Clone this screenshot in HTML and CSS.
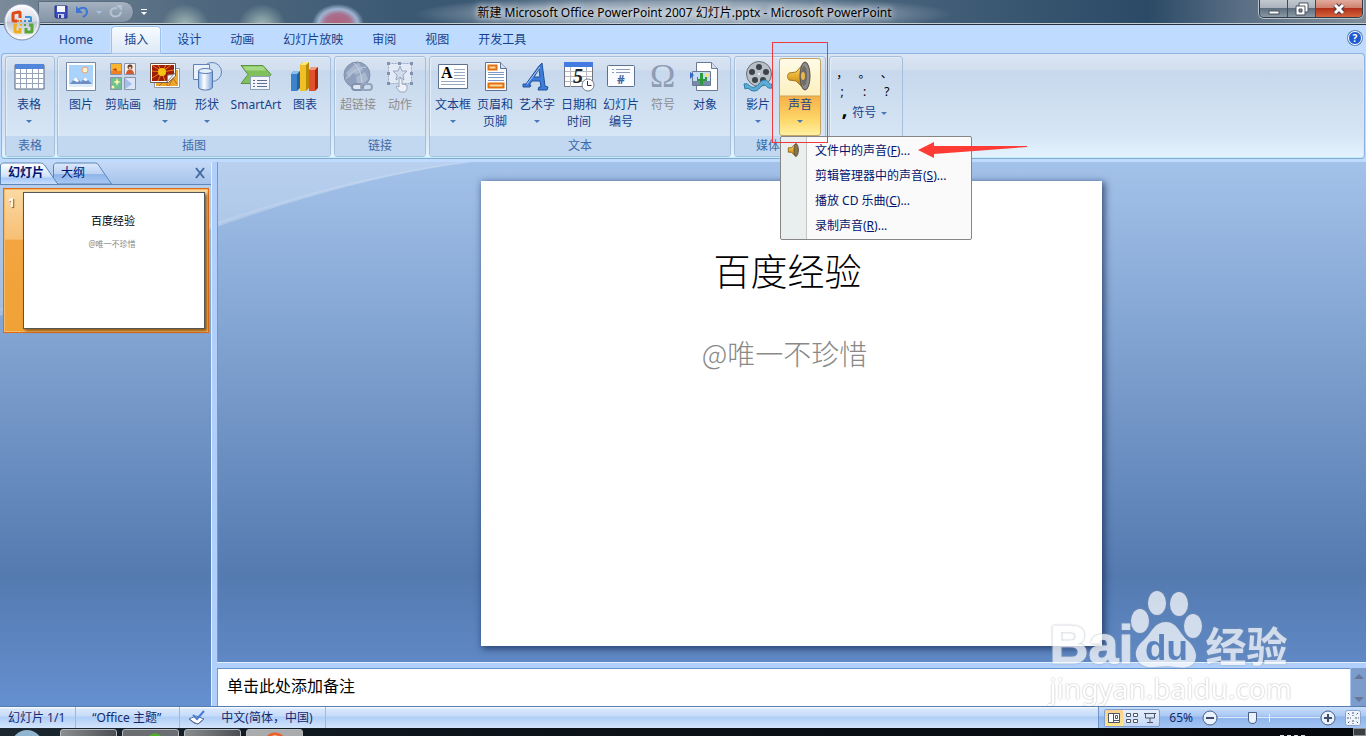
FILE: index.html
```
<!DOCTYPE html>
<html lang="zh-CN">

<head>
    <meta charset="UTF-8">
    <meta name="viewport" content="width=device-width, initial-scale=1.0">
    <title>新建 Microsoft Office PowerPoint 2007 幻灯片.pptx - Microsoft PowerPoint</title>
    <link rel="stylesheet" href="styles.css">
</head>

<body>
    <!-- 标题栏 -->
    <header class="titlebar">
        <button class="orb" aria-label="Office 按钮">
            <svg width="38" height="38" viewBox="0 0 38 38">
                <defs>
                    <linearGradient id="orbBg" x1="0" y1="0" x2="0" y2="1">
                        <stop offset="0" stop-color="#fdfdff" />
                        <stop offset=".48" stop-color="#d3d9e4" />
                        <stop offset=".5" stop-color="#b9c3d3" />
                        <stop offset="1" stop-color="#ffffff" />
                    </linearGradient>
                </defs>
                <circle cx="19" cy="19" r="18" fill="url(#orbBg)" stroke="#7d8da6" />
                <circle cx="19" cy="19" r="16" fill="none" stroke="#fff" opacity=".7" />
                <g fill="none" stroke-width="3">
                    <path d="M17 15V10a1 1 0 0 0-1-1l-5 1a1 1 0 0 0-1 1v6a1 1 0 0 0 1 1h3" stroke="#dd4b17" />
                    <path d="M22 14h5a1 1 0 0 1 1 1v3h-3" stroke="#3d8fd4" stroke-width="2" />
                    <path d="M14 22h-2v6a1 1 0 0 0 1 1h4v-4" stroke="#f2ad1c" />
                    <path d="M26 22h3v6a1 1 0 0 1-1 1h-5v-4" stroke="#5aa53a" />
                </g>
                <g fill="#e8792b"><rect x="17" y="17" width="2" height="2" /><rect x="14" y="17" width="2" height="2" /><rect x="17" y="21" width="2" height="2" fill="#f2ad1c" /><rect x="21" y="17" width="2" height="2" fill="#3d8fd4" /><rect x="21" y="21" width="2" height="2" fill="#5aa53a" /></g>
            </svg>
        </button>
        <div class="quick">
            <button aria-label="保存">
                <svg width="14" height="14" viewBox="0 0 14 14">
                    <path d="M1 1h12v12H2l-1-1z" fill="#3d4fc0" stroke="#26308c" />
                    <path d="M3 1h8v6H3z" fill="#f4f7ff" />
                    <path d="M4 9h6v4H4z" fill="#c8d0e8" />
                    <path d="M5 10h2v3H5z" fill="#26308c" />
                </svg>
            </button>
            <button aria-label="撤消">
                <svg width="14" height="14" viewBox="0 0 14 14">
                    <path d="M3 5c5-4 9-2 9 2 0 3-2 4-4 5" fill="none" stroke="#3f76d6" stroke-width="2" />
                    <path d="M1 1v7h7z" fill="#3f76d6" />
                </svg>
            </button>
            <i class="arrow light"></i>
            <button aria-label="恢复">
                <svg width="14" height="14" viewBox="0 0 14 14">
                    <path d="M8 3C2 3 1 6 2 9c2 4 9 3 10-2" fill="none" stroke="#b4c2d4" stroke-width="2" />
                    <path d="M7 0h6v6z" fill="#b4c2d4" />
                </svg>
            </button>
        </div>
        <button class="quick-more" aria-label="自定义快速访问工具栏"><i></i><i class="arrow white"></i></button>
        <h1>新建 Microsoft Office PowerPoint 2007 幻灯片.pptx - Microsoft PowerPoint</h1>
        <div class="win-buttons">
            <button aria-label="最小化"><svg width="12" height="14"><rect x="1" y="9" width="10" height="3" fill="#fff" stroke="#4b5361" /></svg></button>
            <button aria-label="还原"><svg width="14" height="14"><path d="M4 1h9v9H4z" fill="#fff" stroke="#4b5361" /><path d="M1 4h9v9H1z" fill="#fff" stroke="#4b5361" /><path d="M4 7h3v3H4z" fill="#7f8b9c" stroke="#4b5361" /></svg></button>
            <button class="win-close" aria-label="关闭"><svg width="14" height="14"><path d="M3 3l8 8M11 3l-8 8" stroke="#4b3a42" stroke-width="5" /><path d="M3 3l8 8M11 3l-8 8" stroke="#fff" stroke-width="3" /></svg></button>
        </div>
    </header>

    <!-- 选项卡 -->
    <nav class="tabs">
        <a href="#" class="home">Home</a>
        <a href="#" class="active">插入</a>
        <a href="#">设计</a>
        <a href="#">动画</a>
        <a href="#">幻灯片放映</a>
        <a href="#">审阅</a>
        <a href="#">视图</a>
        <a href="#">开发工具</a>
        <button class="help" aria-label="帮助">?</button>
    </nav>

    <!-- 功能区 -->
    <section class="ribbon">
        <div class="group">
            <div class="group-body">
                <button class="tool">
                    <svg width="32" height="32" viewBox="0 0 32 32">
                        <path d="M2 4h29v24H2z" fill="#fff" stroke="#56657c" />
                        <path d="M2 3h29v5H2z" fill="#4f86dc" />
                        <path d="M2 12.500h29M2 17.500h29M2 22.500h29M7.500 8v20M13.500 8v20M19.500 8v20M25.500 8v20" stroke="#98a5b8" />
                    </svg>
                    <span>表格</span><i class="arrow"></i>
                </button>
            </div>
            <div class="group-title">表格</div>
        </div>

        <div class="group">
            <div class="group-body">
                <button class="tool">
                    <svg width="32" height="32" viewBox="0 0 32 32">
                        <path d="M1.500 1.500h29v28h-29z" fill="#fff" stroke="#7589a5" />
                        <path d="M4 4h24v20H4z" fill="#a9d3fa" />
                        <circle cx="20" cy="9" r="3" fill="#fff0d0" stroke="#f0a070" />
                        <path d="M4 24l7-8 5 5 4-5 8 8z" fill="#6b8fc4" />
                        <path d="M8 19l3-3 3 4-2 1-2-1zM18 19l2-3 3 3-2 1z" fill="#fff" />
                        <path d="M4 23h24v3H4z" fill="#dcecfb" />
                    </svg>
                    <span>图片</span>
                </button>
                <button class="tool">
                    <svg width="32" height="32" viewBox="0 0 32 32">
                        <path d="M3.500 2.500h11v11h-11z" fill="#f9b52f" stroke="#8a94a8" />
                        <path d="M4 10h10v3H4z" fill="#ee7f22" /><path d="M5 9l4-2 1 3z" fill="#c23a18" />
                        <path d="M17.500 2.500h11v11h-11z" fill="#f4eee8" stroke="#8a94a8" />
                        <circle cx="23" cy="6" r="2.500" fill="#5a3a30" /><path d="M19 13c0-6 8-6 8 0z" fill="#d2582e" /><circle cx="23" cy="7" r="1.500" fill="#f0c09a" />
                        <path d="M3.500 16.500h11v12h-11z" fill="#6fbf92" stroke="#8a94a8" />
                        <path d="M10 17l1 3 3 1-3 1-1 3-1-3-3-1 3-1z" fill="#fbf6a8" /><circle cx="6" cy="26" r="1.500" fill="#fbf6a8" />
                        <path d="M17.500 16.500h11v12h-11z" fill="#dbe6fb" stroke="#8a94a8" />
                        <path d="M18 17l7 6-7 5z" fill="#a5bdec" />
                    </svg>
                    <span>剪贴画</span>
                </button>
                <button class="tool">
                    <svg width="32" height="32" viewBox="0 0 32 32">
                        <path d="M5.500 7.500h25v19h-25z" fill="#fff" stroke="#8f98a8" />
                        <path d="M7 9h22v16H7z" fill="#eda62c" />
                        <path d="M10 25l8-8 0 8M20 25l4-8 4 6" stroke="#c66f12" fill="none" />
                        <path d="M1.500 2.500h25V15l-7 6.500h-18z" fill="#fff" stroke="#6f5a50" />
                        <path d="M3 4h22v9l-7 7H3z" fill="#9c1f08" />
                        <path d="M13 11L3 4M13 11L9 4M13 11l4-7M13 11l9-7M13 11L3 10M13 11L3 17M13 11l-4 9M13 11l3 9M13 11l12-2" stroke="#ef7b14" stroke-width="1" />
                        <circle cx="13" cy="11" r="4" fill="#f6c414" />
                        <path d="M18 21c1-3 0-5 1-7 3 0 5 0 7-2z" fill="#fff" stroke="#888" />
                    </svg>
                    <span>相册</span><i class="arrow"></i>
                </button>
                <button class="tool">
                    <svg width="32" height="32" viewBox="0 0 32 32">
                        <defs><linearGradient id="cyl"><stop offset="0" stop-color="#8fb5e6" /><stop offset=".4" stop-color="#fff" /><stop offset="1" stop-color="#7ba4dc" /></linearGradient></defs>
                        <circle cx="21" cy="11" r="9.500" fill="#cfe0f5" stroke="#5e83b8" />
                        <path d="M2.500 3.500h16v15h-16z" fill="#e9f1fc" stroke="#5e83b8" />
                        <path d="M7.500 10v16c0 4 14 4 14 0V10z" fill="url(#cyl)" stroke="#5578ad" />
                        <ellipse cx="14.500" cy="10" rx="7" ry="2.500" fill="#e6f0fd" stroke="#5578ad" />
                    </svg>
                    <span>形状</span><i class="arrow"></i>
                </button>
                <button class="tool wide">
                    <svg width="34" height="32" viewBox="0 0 34 32">
                        <path d="M2 4.500h22l8 9-7 9H2l7-9z" fill="#7fc05c" stroke="#5a9440" />
                        <path d="M4 5.500h20l3 4H7z" fill="#a5d985" />
                        <path d="M11.500 15.500h19v13h-19z" fill="#f2f6fc" stroke="#8d9fba" />
                        <path d="M14 19.500h2M18 19.500h10M14 22.500h2M18 22.500h10M14 25.500h2M18 25.500h10" stroke="#5b6e8c" />
                    </svg>
                    <span>SmartArt</span>
                </button>
                <button class="tool">
                    <svg width="32" height="32" viewBox="0 0 32 32">
                        <path d="M2 13l3-3h6v17l-3 3H2z" fill="#27609f" /><path d="M2 13h6v17H2z" fill="#3b83cd" /><path d="M2 13l3-3h6l-3 3z" fill="#8cc0ee" />
                        <path d="M11 4l3-3h6v26l-3 3h-6z" fill="#b98a08" /><path d="M11 4h6v26h-6z" fill="#f0c024" /><path d="M11 4l3-3h6l-3 3z" fill="#fbe77a" />
                        <path d="M20 9l3-3h6v21l-3 3h-6z" fill="#a52a10" /><path d="M20 9h6v21h-6z" fill="#e2502c" /><path d="M20 9l3-3h6l-3 3z" fill="#f79a7e" />
                    </svg>
                    <span>图表</span>
                </button>
            </div>
            <div class="group-title">插图</div>
        </div>

        <div class="group">
            <div class="group-body">
                <button class="tool" disabled>
                    <svg width="32" height="32" viewBox="0 0 32 32">
                        <circle cx="15" cy="14" r="13" fill="#8fa0bd" stroke="#8191ae" />
                        <path d="M4 12l8-8 5-2 4 7-6 5-4-2-4 5zM14 16l9-5 3 7-6 6-5-2z" fill="#a9b8cf" />
                        <path d="M4 18c5-7 12-11 20-12M12 2c6 6 8 13 8 23" stroke="#c5d0e0" fill="none" />
                        <rect x="10" y="23" width="11" height="6" rx="3" fill="#dfe6f0" stroke="#8191ae" stroke-width="2" />
                        <rect x="19" y="23" width="11" height="6" rx="3" fill="none" stroke="#95a3bb" stroke-width="2" />
                    </svg>
                    <span>超链接</span>
                </button>
                <button class="tool" disabled>
                    <svg width="32" height="32" viewBox="0 0 32 32">
                        <path d="M4.500 2.500h23v20h-23z" fill="#e2eaf5" stroke="#9aa8c0" stroke-dasharray="2 1" />
                        <path d="M16 5l2 5h5l-4 4 1 5-4-3-4 3 1-5-4-4h5z" fill="#d2dceb" stroke="#9aa8c0" />
                        <path d="M3 1h3v3H3zM14 1h3v3h-3zM26 1h3v3h-3zM3 21h3v3H3zM26 21h3v3h-3zM3 11h3v3H3zM26 11h3v3h-3z" fill="#8191ae" />
                        <path d="M15 19c0-2 3-2 3 0v4l5 1v4l-2 3h-5l-4-5 1-1 2 1z" fill="#edf1f7" stroke="#9aa8c0" />
                    </svg>
                    <span>动作</span>
                </button>
            </div>
            <div class="group-title">链接</div>
        </div>

        <div class="group">
            <div class="group-body">
                <button class="tool">
                    <svg width="32" height="32" viewBox="0 0 32 32">
                        <path d="M1.500 3.500h29v24h-29z" fill="#fff" stroke="#5d7190" />
                        <text x="4" y="17" class="serif-a">A</text>
                        <path d="M17 8.500h11M17 11.500h11M17 14.500h11M17 17.500h11M4 20.500h24M4 23.500h24" stroke="#9aa9c0" />
                    </svg>
                    <span>文本框</span><i class="arrow"></i>
                </button>
                <button class="tool">
                    <svg width="32" height="32" viewBox="0 0 32 32">
                        <path d="M6.500 1.500h15l6 6v22h-21z" fill="#fff" stroke="#5d7190" />
                        <path d="M21.500 1.500v6h6" fill="#d4deee" stroke="#5d7190" />
                        <path d="M9.500 4.500h8v4h-8zM9.500 22.500h15v4h-15z" fill="#ffd9a0" stroke="#e0720e" stroke-width="2" />
                        <path d="M9 11.500h16M9 13.500h16M9 16.500h16M9 19.500h16" stroke="#7f9ac6" />
                    </svg>
                    <span>页眉和<br>页脚</span>
                </button>
                <button class="tool">
                    <svg width="32" height="32" viewBox="0 0 32 32">
                        <path d="M2 23h3L18 5l3-3 3 23 3 1-1 3h-9l1-3h2l-1-6h-8l-3 4h2l-1 2H2zM13 16h6l-1-8z" fill="#3c7ddb" stroke="#22509a" fill-rule="evenodd" />
                        <path d="M6 23L19 6" stroke="#a8ccf8" />
                    </svg>
                    <span>艺术字</span><i class="arrow"></i>
                </button>
                <button class="tool">
                    <svg width="32" height="32" viewBox="0 0 32 32">
                        <path d="M1.500 2.500h28v23h-28z" fill="#fff" stroke="#6e7480" />
                        <path d="M1 1h29v5H1z" fill="#447be0" />
                        <path d="M2 10.500h27M2 15.500h27M2 20.500h27M7.500 6v20M23.500 6v20" stroke="#b7b9bf" />
                        <text x="10" y="22" class="serif-5">5</text>
                        <circle cx="25" cy="24" r="6" fill="#fff" stroke="#777f8c" />
                        <path d="M24.500 20v4.500h4" stroke="#333" fill="none" />
                    </svg>
                    <span>日期和<br>时间</span>
                </button>
                <button class="tool">
                    <svg width="32" height="32" viewBox="0 0 32 32">
                        <rect x="2.500" y="4.500" width="27" height="21" rx="1" fill="#fafcff" stroke="#5d7190" />
                        <path d="M7 8.500h2M11 8.500h14M7 11.500h2M11 11.500h14" stroke="#8a9bb8" />
                        <text x="12" y="23" class="hash">#</text>
                    </svg>
                    <span>幻灯片<br>编号</span>
                </button>
                <button class="tool" disabled>
                    <svg class="omega-box" width="32" height="32" viewBox="0 0 32 32"><text x="3" y="26" class="omega">Ω</text></svg>
                    <span>符号</span>
                </button>
                <button class="tool">
                    <svg width="32" height="32" viewBox="0 0 32 32">
                        <path d="M7.500 1.500h15l6 6v22h-21z" fill="#fff" stroke="#6a7a94" />
                        <path d="M22.500 1.500v6h6" fill="#d4deee" stroke="#6a7a94" />
                        <path d="M3.500 10.500h18v14h-18z" fill="#c3ddf6" stroke="#6a7a94" />
                        <path d="M4 20h17v4H4z" fill="#758aa4" />
                        <circle cx="18" cy="14" r="2" fill="#f7e27a" />
                        <path d="M11 12h3v6h2v-2h2v4h-4v4h-3v-4H8v-4h1v2h2z" fill="#2f9a3c" />
                        <path d="M1 11l4 3-4 4z" fill="#3468c8" />
                    </svg>
                    <span>对象</span>
                </button>
            </div>
            <div class="group-title">文本</div>
        </div>

        <div class="group">
            <div class="group-body">
                <button class="tool">
                    <svg width="32" height="32" viewBox="0 0 32 32">
                        <circle cx="17" cy="13" r="12.500" fill="#b9bfc6" stroke="#666d75" />
                        <g fill="#3c4249"><circle cx="17" cy="6" r="3" /><circle cx="10" cy="11" r="3" /><circle cx="24" cy="11" r="3" /><circle cx="13" cy="19" r="3" /><circle cx="21" cy="19" r="3" /></g>
                        <circle cx="17" cy="13" r="1" fill="#fff" />
                        <path d="M2 23c5-2 6 5 11 3 5-2 5-7 10-7 4 0 3 5 7 4v4c-6 1-5-3-8-3-4 0-4 6-10 6-5 0-4-4-9-2z" fill="#5badd8" stroke="#2f7ba8" />
                    </svg>
                    <span>影片</span><i class="arrow"></i>
                </button>
                <div class="dropdown">
                    <button class="tool pressed">
                        <svg width="32" height="32" viewBox="0 0 32 32">
                            <defs><linearGradient id="horn" x1="0" y1="0" x2="0" y2="1"><stop offset="0" stop-color="#fbe08a" /><stop offset=".5" stop-color="#e9b032" /><stop offset="1" stop-color="#9a6a10" /></linearGradient></defs>
                            <path d="M5 12l7-1L21 1v28l-9-9-7-1c-2-2-2-5 0-7z" fill="url(#horn)" stroke="#a87a20" />
                            <ellipse cx="21" cy="15" rx="5" ry="14" fill="#8d8b88" stroke="#4f4b48" />
                            <ellipse cx="20" cy="15" rx="3" ry="10" fill="#6e6a66" />
                            <ellipse cx="19" cy="15" rx="2" ry="4" fill="#e8b84c" />
                        </svg>
                        <span>声音</span><i class="arrow"></i>
                    </button>
                    <ul class="menu">
                        <li><a href="#"><svg width="14" height="16" viewBox="0 0 32 32"><path d="M3 11h7L20 1v30L10 21H3z" fill="url(#horn)" stroke="#8a6414" stroke-width="2" /><ellipse cx="21" cy="16" rx="5" ry="14" fill="#8d7440" stroke="#4f4b48" stroke-width="2" /></svg>文件中的声音(<u>F</u>)...</a></li>
                        <li><a href="#">剪辑管理器中的声音(<u>S</u>)...</a></li>
                        <li><a href="#">播放 CD 乐曲(<u>C</u>)...</a></li>
                        <li><a href="#">录制声音(<u>R</u>)...</a></li>
                    </ul>
                    <div class="mark-box"></div>
                    <svg class="mark-arrow" width="110" height="18" viewBox="0 0 110 18"><path d="M0 9L16 1v4l93 0v1L16 13v4z" fill="#ff3b35" /></svg>
                </div>
            </div>
            <div class="group-title">媒体剪辑</div>
        </div>

        <div class="group">
            <div class="group-body symbols">
                <button>，</button><button>。</button><button>、</button>
                <button>;</button><button>:</button><button>?</button>
                <button class="symbols-more"><b>,</b>符号<i class="arrow"></i></button>
            </div>
            <div class="group-title"></div>
        </div>
    </section>

    <!-- 工作区 -->
    <main class="main">
        <svg class="wave" width="470" height="154" viewBox="0 0 470 154">
            <path d="M0 0h470Q280 25 0 154z" fill="#fff" opacity=".24" />
            <path d="M470 0Q280 22 0 148" fill="none" stroke="#fff" stroke-width="2" opacity=".12" />
        </svg>
        <aside class="pane">
            <div class="pane-tabs">
                <svg width="114" height="22" viewBox="0 0 114 22">
                    <defs><linearGradient id="tabBg" x1="0" y1="0" x2="0" y2="1"><stop offset="0" stop-color="#dce9fb" /><stop offset=".5" stop-color="#bcd3f3" /><stop offset=".55" stop-color="#8fb5ea" /><stop offset="1" stop-color="#a9c8f2" /></linearGradient>
                        <linearGradient id="tabOn" x1="0" y1="0" x2="0" y2="1"><stop offset="0" stop-color="#fff" /><stop offset=".6" stop-color="#d2e3fb" /><stop offset=".7" stop-color="#a6caf9" /><stop offset="1" stop-color="#cfe1f9" /></linearGradient></defs>
                    <path d="M53.500 21V3l2-2h40q2 0 3 2l13 19H58z" fill="url(#tabBg)" stroke="#5c87b8" />
                    <path d="M.5 23V3l2-2h38q2 0 4 2l14 20z" fill="url(#tabOn)" stroke="#5c87b8" />
                </svg>
                <button class="on">幻灯片</button>
                <button>大纲</button>
                <button class="pane-close" aria-label="关闭"><svg width="12" height="12"><path d="M2 1l8 10M10 1L2 11" stroke="#416ba3" stroke-width="2" /></svg></button>
            </div>
            <div class="thumb">
                <span>1</span>
                <div class="thumb-slide">
                    <h3>百度经验</h3>
                    <p>@唯一不珍惜</p>
                </div>
            </div>
        </aside>
        <div class="work">
            <div class="stage">
                <article class="slide">
                    <h2>百度经验</h2>
                    <p>@唯一不珍惜</p>
                </article>
            </div>
            <div class="notes">
                <textarea rows="1" aria-label="备注">单击此处添加备注</textarea>
                <div class="scroll"><i></i><i class="down"></i></div>
            </div>
        </div>
        <div class="watermark">
            <div class="logo">
                <span class="logo-bai">Bai</span>
                <svg width="74" height="80" viewBox="0 0 74 80">
                    <g fill="#fff"><ellipse cx="10" cy="31" rx="9" ry="12" /><ellipse cx="27" cy="13" rx="9" ry="12" /><ellipse cx="49" cy="14" rx="9" ry="12" /><ellipse cx="63" cy="36" rx="9" ry="12" />
                        <path d="M36 32c-12 0-15 12-22 18S4 62 7 69s11 9 18 8 15-1 21 0 16 1 19-6-1-15-8-21-10-18-21-18z" /></g>
                    <text x="15" y="70" class="du">du</text>
                </svg>
                <span class="logo-cn">经验</span>
            </div>
            <div class="logo-url">jingyan.baidu.com</div>
        </div>
    </main>

    <!-- 状态栏 -->
    <footer class="status">
        <span class="cell">幻灯片 1/1</span>
        <span class="cell theme">“Office 主题”</span>
        <span class="cell lang">
            <svg width="17" height="15" viewBox="0 0 17 15"><path d="M1 9l7-3 8 3-6 5-4-1z" fill="#fff" stroke="#5c6f98" /><path d="M1 9l6 4 3 1 6-5" fill="none" stroke="#5c6f98" /><path d="M5 5l4 4 7-8" fill="none" stroke="#4a7bdc" stroke-width="2" /></svg>
            中文(简体，中国)
        </span>
        <div class="zoombar">
            <div class="views">
                <button class="on" aria-label="普通视图"><svg width="12" height="12"><path d="M.5 1.500h11v9h-11zM5.500 1.500v9M7.500 3.500h2v3h-2zM5.500 8.500h6" fill="#fff" stroke="#4d5666" /></svg></button>
                <button aria-label="幻灯片浏览"><svg width="12" height="12"><path d="M.5 1.500h4v3h-4zM7.500 1.500h4v3h-4zM.5 7.500h4v3h-4zM7.500 7.500h4v3h-4z" fill="#fff" stroke="#4d5666" /></svg></button>
                <button aria-label="幻灯片放映"><svg width="12" height="12"><path d="M0 1.500h12M1.500 2v4h9V2M6 6v4M3 10.500h6" fill="none" stroke="#4d5666" stroke-width="1" /></svg></button>
            </div>
            <span class="percent">65%</span>
            <button class="round" aria-label="缩小"><svg width="16" height="16"><circle cx="8" cy="8" r="7" fill="#e9f1fd" stroke="#4a5f85" /><path d="M4 8h8" stroke="#3c4c6b" stroke-width="2" /></svg></button>
            <input type="range" min="0" max="100" value="32" aria-label="显示比例">
            <button class="round" aria-label="放大"><svg width="16" height="16"><circle cx="8" cy="8" r="7" fill="#e9f1fd" stroke="#4a5f85" /><path d="M4 8h8M8 4v8" stroke="#3c4c6b" stroke-width="2" /></svg></button>
            <button class="fit" aria-label="适应窗口"><svg width="16" height="16"><rect x=".5" y=".5" width="15" height="15" rx="2" fill="#eef4fd" stroke="#8aa4cc" /><path d="M8 2v4M8 10v4M2 8h4M10 8h4M3 3l2 2M13 3l-2 2M3 13l2-2M13 13l-2-2" stroke="#4d5666" stroke-dasharray="2 1" /></svg></button>
        </div>
    </footer>

    <!-- 任务栏 -->
    <div class="taskbar">
        <i class="start"></i>
        <i class="task"></i>
        <i class="task green"></i>
        <i class="task"></i>
        <i class="task ppt"></i>
        <i class="clock"></i>
        <i class="desk"></i>
    </div>
</body>

</html>
```
FILE: styles.css
```
* {
    box-sizing: border-box;
}

body {
    margin: 0;
    height: 100vh;
    display: flex;
    flex-direction: column;
    overflow: hidden;
    background: #bfdbff;
    color: #15428b;
    font: 12px/16px "Noto Sans", "Noto Sans CJK SC", sans-serif;
}

button {
    margin: 0;
    padding: 0;
    border: 0;
    background: none;
    color: inherit;
    font: inherit;
}

a {
    color: inherit;
    text-decoration: none;
}

svg {
    display: block;
    flex: none;
}

.arrow {
    width: 0;
    border: 3px solid transparent;
    border-top-color: #4a78b5;
    border-bottom: 0;
}

.arrow.light {
    border-top-color: #a9c2e6;
}

.arrow.white {
    border-top-color: #fff;
}

/* 标题栏 */
.titlebar {
    position: relative;
    flex: 0 0 25px;
    display: flex;
    align-items: center;
    background:
        radial-gradient(ellipse 26px 20px at 338px 24px, #b0607a 0, #a86f8c 50%, #9db4d2 75%, transparent 100%),
        radial-gradient(ellipse 24px 22px at 185px 26px, #a5bcb8, transparent),
        radial-gradient(ellipse 24px 22px at 262px 26px, #a5bcb8, transparent),
        radial-gradient(ellipse 270px 20px at 50% 14px, #b4c1cd 0, #8d9fb0 60%, transparent 100%),
        linear-gradient(90deg, #7a8a99 0, #51697f 14%, #3b5873 30%, #46617a 66%, #2b4a66 84%, #5b6f85 91%, #7f8c98 100%);
    border-bottom: 1px solid #22303e;
    box-shadow: inset 0 -1px #c3ccd0;
}

.orb {
    position: absolute;
    left: 3px;
    top: 3px;
    z-index: 5;
}

.quick {
    height: 22px;
    margin-left: 38px;
    padding: 0 10px 0 15px;
    display: flex;
    align-items: center;
    gap: 7px;
    border: 1px solid #5b6c80;
    border-radius: 0 12px 12px 0;
    background: linear-gradient(#a3b1c0, #8494a6);
}

.quick-more {
    margin-left: 7px;
}

.quick-more i {
    display: block;
}

.quick-more i:first-child {
    height: 1px;
    margin-bottom: 2px;
    background: #fff;
}

.titlebar h1 {
    position: absolute;
    left: 0;
    right: 0;
    top: 5px;
    margin: 0 0 0 3px;
    text-align: center;
    color: #000;
    font-size: 12px;
    font-weight: 400;
    text-shadow: 0 0 6px #fff, 0 0 8px #dfe6ec;
}

.win-buttons {
    align-self: flex-start;
    margin: 0 3px 0 auto;
    display: flex;
    height: 18px;
    border: 1px solid #2f3b49;
    border-top: 0;
    border-radius: 0 0 5px 5px;
    box-shadow: 0 0 0 1px #b6c1ca;
    overflow: hidden;
}

.win-buttons button {
    width: 28px;
    display: flex;
    justify-content: center;
    align-items: center;
    border-right: 1px solid #3c4a5a;
    background: linear-gradient(#c2c9d0 0, #aab3bd 45%, #5f6e7e 50%, #8c99a6 100%);
}

.win-buttons .win-close {
    width: 46px;
    border-right: 0;
    background: linear-gradient(#e2ab9f 0, #d0826f 45%, #b3311a 50%, #d4633c 100%);
}

/* 选项卡 */
.tabs {
    flex: 0 0 27px;
    display: flex;
    gap: 3px;
    padding: 1px 4px 0 46px;
    background: #bfdbff;
}

.tabs a {
    height: 27px;
    padding: 5px 12px 0;
    border: 1px solid transparent;
    border-bottom: 0;
}

.tabs .home {
    margin-right: 2px;
}

.tabs .active {
    position: relative;
    z-index: 3;
    border-color: #9bc3ee;
    border-radius: 4px 4px 0 0;
    background: linear-gradient(#f7fbff, #dde9f7);
    box-shadow: 0 0 2px #fff;
}

.help {
    width: 14px;
    height: 14px;
    margin: 5px 0 0 auto;
    border: 1px solid #fff;
    border-radius: 50%;
    background: #1d58cf;
    box-shadow: 0 0 0 1px #5c85c4;
    color: #fff;
    font-size: 10px;
    font-weight: 700;
    line-height: 12px;
}

/* 功能区 */
.ribbon {
    flex: none;
    position: relative;
    z-index: 2;
    display: flex;
    gap: 3px;
    margin: 0 1px 3px 1px;
    padding: 2px 2px 1px 3px;
    border: 1px solid #8db2e3;
    border-bottom-color: #86a9cf;
    border-radius: 4px;
    background: linear-gradient(#dbe6f3 0, #d1deee 16px, #c7d8ed 17px, #d6e5f4 80px, #e3f4ff 100%);
    box-shadow: inset 0 -1px #c0f0fb, inset -1px 0 #c8ecfb;
}

.group {
    border: 1px solid #a5c0dd;
    border-radius: 3px;
    box-shadow: inset 1px 1px #e4eef8;
    padding-top: 1px;
}

.group:first-child {
    margin-right: -1px;
}

.group-body {
    display: flex;
    height: 78px;
    padding: 0 4px 0 2px;
}

.group-title {
    height: 20px;
    border-radius: 0 0 2px 2px;
    background: #c1d8f0;
    color: #3e6aaa;
    line-height: 20px;
    text-align: center;
}

.tool {
    width: 42px;
    height: 78px;
    padding-top: 3px;
    display: flex;
    flex-direction: column;
    align-items: center;
    white-space: nowrap;
}

.tool.wide {
    width: 56px;
}

.tool span {
    margin-top: 3px;
    line-height: 17px;
}

.tool .arrow {
    margin-top: 7px;
}

.tool:disabled {
    color: #8d8d8d;
}

.tool.pressed {
    padding-top: 2px;
    border: 1px solid #c2a564;
    border-radius: 3px;
    background: linear-gradient(#fffbe6 0, #fdefc0 36px, #c9a45c 37px, #f8b04a 38px, #fdd667 60px, #fff0a0 100%);
}

.serif-a,
.serif-5,
.omega {
    font-family: "Liberation Serif", serif;
}

.serif-a {
    font-size: 16px;
    font-weight: 700;
}

.serif-5 {
    font-size: 20px;
    font-style: italic;
    font-weight: 700;
    fill: #222;
}

.hash {
    font-size: 12px;
    font-weight: 700;
    fill: #41679f;
}

.omega-box {
    overflow: visible;
}

.omega {
    font-size: 34px;
    fill: #8e9cb4;
}

.symbols {
    width: 72px;
    padding: 7px 4px 0 1px;
    display: grid;
    grid-template-columns: repeat(3, 1fr);
    grid-auto-rows: 18px;
    color: #000;
}

.symbols-more {
    grid-column: 1 / 4;
    display: flex;
    align-items: center;
    justify-content: center;
    gap: 5px;
    margin-top: 3px;
    height: 18px;
    color: #15428b;
}

.symbols-more b {
    color: #000;
    font-size: 20px;
    line-height: 10px;
    padding-bottom: 8px;
}

/* 声音下拉菜单 */
.dropdown {
    position: relative;
}

.menu {
    position: absolute;
    left: 1px;
    top: 78px;
    width: 192px;
    margin: 0;
    padding: 1px;
    list-style: none;
    border: 1px solid #868686;
    border-radius: 2px;
    background: linear-gradient(90deg, #e9eeee 0, #e9eeee 25px, #c5c5c5 25px, #c5c5c5 26px, #fafafa 26px);
    color: #00156e;
}

.menu a {
    position: relative;
    display: block;
    height: 25px;
    padding-left: 33px;
    line-height: 26px;
}

.menu svg {
    position: absolute;
    left: 5px;
    top: 4px;
}

.mark-box {
    position: absolute;
    left: -7px;
    top: -16px;
    width: 56px;
    height: 101px;
    border: 1px solid #f03a3e;
    pointer-events: none;
}

.mark-arrow {
    position: absolute;
    left: 139px;
    top: 83px;
}

/* 工作区 */
.main {
    position: relative;
    flex: 1;
    min-height: 0;
    display: flex;
    background: linear-gradient(#a3c2ea 0, #547ab0 76%, #6590cf 100%);
}

.wave {
    position: absolute;
    left: 0;
    top: 0;
}

.pane {
    position: relative;
    flex: 0 0 212px;
}

.pane-tabs {
    position: relative;
    height: 23px;
    display: flex;
    align-items: center;
    border: 1px solid #5c87b8;
    border-width: 0 1px 1px 0;
    background: linear-gradient(#c6daf6, #a5c3ec);
    color: #00156e;
}

.pane-tabs > svg {
    position: absolute;
    left: 0;
    top: 0;
}

.pane-tabs button {
    position: relative;
    margin-left: 17px;
}

.pane-tabs .on {
    margin-left: 8px;
    font-weight: 700;
}

.pane-tabs .pane-close {
    margin: 0 5px 0 auto;
}

.thumb {
    display: flex;
    margin: 3px 3px 0;
    padding: 3px;
    border: 1px solid #e06a14;
    background: linear-gradient(#fbd9a4 0, #f7bf74 35%, #f3a640 36%, #f0a136 100%);
    box-shadow: inset 0 0 0 1px #f8b964;
}

.thumb span {
    flex: 0 0 16px;
    padding: 3px 0 0 1px;
    color: #fff;
    font-weight: 700;
    text-shadow: 1px 1px 1px #6b4a20;
}

.thumb-slide {
    flex: 1;
    aspect-ratio: 4 / 3;
    border: 1px solid #555;
    background: #fff;
    box-shadow: 2px 2px 3px #8a5a1c;
    text-align: center;
}

.thumb-slide h3 {
    margin: 20px 2px 0 0;
    color: #000;
    font-size: 11px;
    font-weight: 400;
}

.thumb-slide p {
    margin: 7px 4px 0 0;
    color: #898989;
    font-size: 8px;
}

.work {
    position: relative;
    flex: 1;
    min-width: 0;
    display: flex;
    flex-direction: column;
    border-left: 5px solid #b0d0fb;
    box-shadow: inset 1px 0 #6f99d0, -1px 0 #e6f0fd;
}

.stage {
    flex: 1;
    min-height: 0;
    padding-top: 19px;
}

.slide {
    width: 54%;
    aspect-ratio: 4 / 3;
    margin: 0 auto;
    background: #fff;
    box-shadow: 2px 2px 7px 1px rgba(20, 40, 80, .7);
    text-align: center;
    font-family: "Noto Sans CJK SC", sans-serif;
    font-weight: 300;
    overflow: hidden;
}

.slide h2 {
    margin: 63px 8px 0 0;
    color: #000;
    font-size: 37px;
    font-weight: 300;
    line-height: 52px;
}

.slide p {
    margin: 37px 14px 0 0;
    color: #898989;
    font-size: 28px;
    line-height: 40px;
}

.notes {
    position: relative;
    flex: 0 0 43px;
    display: flex;
    border-top: 5px solid #b0d0fb;
    box-shadow: inset 0 1px #6593cf, 0 -1px #e6f0fd;
}

.notes textarea {
    flex: 1;
    margin: 1px 0 0 1px;
    padding: 4px 9px;
    border: 0;
    resize: none;
    overflow: hidden;
    background: #fff;
    color: #000;
    font: 16px/24px "Noto Sans CJK SC", sans-serif;
}

.scroll {
    width: 16px;
    padding: 6px 0 4px;
    display: flex;
    flex-direction: column;
    align-items: center;
    justify-content: space-between;
    border-left: 1px solid #a9c8f2;
    background: #7c9ccb;
}

.scroll i {
    border: 5px solid transparent;
    border-top: 0;
    border-bottom-color: #66779a;
}

.scroll .down {
    transform: rotate(180deg);
}

.watermark {
    position: absolute;
    right: 74px;
    bottom: 0;
    opacity: .72;
    color: #fff;
}

.logo {
    display: flex;
    align-items: flex-end;
    filter: drop-shadow(0 0 1px #8a96a8);
}

.logo-bai {
    font: 700 54px/52px "Liberation Sans", sans-serif;
    -webkit-text-stroke: 1px #fff;
}

.logo svg {
    margin-left: -4px;
}

.logo-cn {
    margin: 0 4px 3px 2px;
    font: 700 41px/46px "Noto Sans CJK SC", sans-serif;
}

.du {
    font: 700 35px "Liberation Sans", sans-serif;
    fill: #5a83bd;
}

.logo-url {
    height: 36px;
    font-size: 28px;
    line-height: 36px;
    text-shadow: 0 0 2px #888;
}

/* 状态栏 */
.status {
    flex: 0 0 22px;
    display: flex;
    border-top: 1px solid #567db0;
    background: linear-gradient(#fff 0, #d9e7fb 2px, #c5dcf9 9px, #b0cef7 10px, #d3e4fc 100%);
    line-height: 21px;
}

.cell {
    padding: 0 10px 0 8px;
    border-right: 1px solid #9ab9e6;
    color: #15296e;
}

.theme {
    padding: 0 18px 0 16px;
}

.lang {
    display: flex;
    align-items: center;
    gap: 16px;
    padding: 0 12px 0 8px;
}

.zoombar {
    margin-left: auto;
    padding: 0 5px;
    display: flex;
    align-items: center;
    border-left: 1px solid #6e93c8;
    background: linear-gradient(#c9defb 0, #a9c8f3 9px, #8db4ec 10px, #a4c5f2 100%);
    color: #15296e;
}

.views {
    display: flex;
    height: 18px;
    border: 1px solid #7f9fcf;
    border-radius: 2px;
    background: linear-gradient(#e6effc, #c3d9f8);
}

.views button {
    width: 18px;
    display: flex;
    align-items: center;
    justify-content: center;
}

.views .on {
    background: linear-gradient(#f9cf92, #ffe58a);
}

.percent {
    margin: 0 9px;
}

.zoombar input {
    width: 102px;
    height: 16px;
    margin: 0;
    appearance: none;
    background:
        linear-gradient(#e8f1fd, #e8f1fd) 50% 50% / 1px 8px no-repeat,
        linear-gradient(#dce9fb, #dce9fb) 50% 50% / 100% 1px no-repeat;
}

.zoombar input::-webkit-slider-thumb {
    appearance: none;
    width: 9px;
    height: 12px;
    border: 1px solid #4a5f85;
    border-radius: 1px 1px 5px 5px;
    background: #e9f1fd;
}

.fit {
    margin-left: 9px;
}

/* 任务栏 */
.taskbar {
    flex: 0 0 8px;
    display: flex;
    gap: 5px;
    overflow: hidden;
    background: linear-gradient(90deg, #1c2730, #0d141b 30%, #05080c);
}

.start {
    width: 32px;
    height: 32px;
    margin: 2px 12px 0 11px;
    border-radius: 50%;
    background: #8fb5cf;
}

.task {
    width: 57px;
    height: 20px;
    margin-top: 1px;
    border: 1px solid #b5b9bd;
    border-radius: 3px;
    background: linear-gradient(90deg, #8a8e91, #4b4f53);
}

.task.green {
    background: radial-gradient(circle at 32px 12px, #4fb02c 8px, transparent 9px), #6a6e71;
}

.task.ppt {
    background: radial-gradient(circle at 28px 14px, #fff 8px, #e8622d 9px, #e8622d 11px, transparent 12px), #a9abad;
}

.clock {
    width: 28px;
    height: 2px;
    margin: 7px 40px 0 auto;
    background: repeating-linear-gradient(90deg, #ddd 0, #ddd 4px, transparent 4px, transparent 7px);
}

.desk {
    width: 13px;
    border: 1px solid #8b9095;
    background: #3b4045;
}
```
